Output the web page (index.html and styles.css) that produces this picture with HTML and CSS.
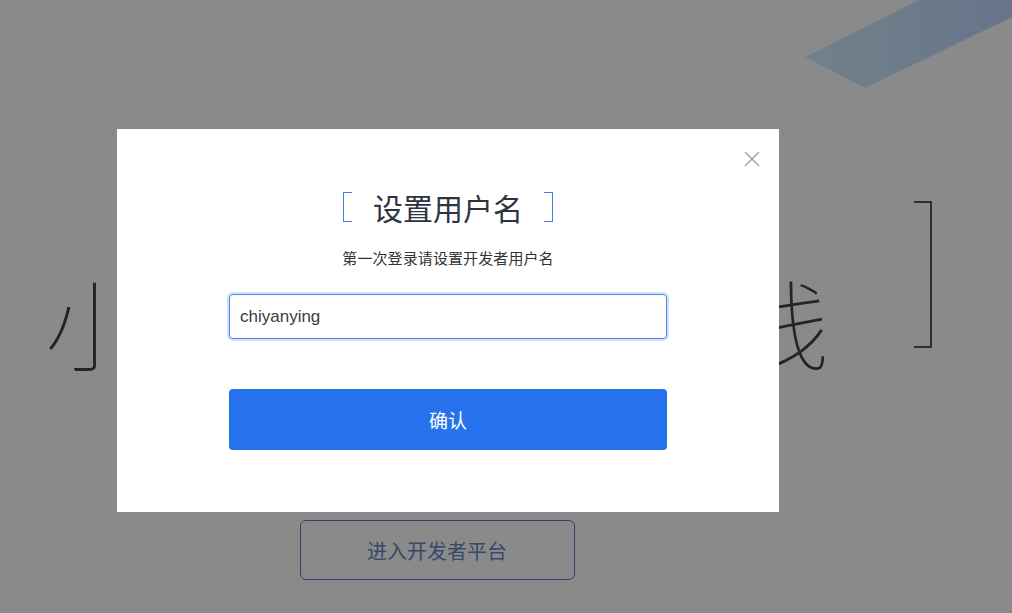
FILE: index.html
```html
<!DOCTYPE html>
<html lang="zh-CN">
<head>
    <meta charset="UTF-8">
    <meta name="viewport" content="width=device-width, initial-scale=1.0">
    <title>开发者平台</title>
    <link rel="stylesheet" href="styles.css">
</head>
<body>
    <div class="page">
        <div class="dots"></div>
        <svg class="ribbon" width="207" height="90" viewBox="0 0 207 90">
            <defs>
                <linearGradient id="rb" x1="0" y1="0" x2="1" y2="0">
                    <stop offset="0" stop-color="#d2f0ff"/>
                    <stop offset="1" stop-color="#bcd8ff"/>
                </linearGradient>
            </defs>
            <polygon points="0,57 114,0 207,0 207,17 60,88" fill="url(#rb)"/>
        </svg>
        <div class="hero">
            <div class="slogan">
                <span class="big-bracket left"></span>
                <h1>小程序云开发上线</h1>
                <span class="big-bracket right"></span>
            </div>
            <a class="enter-btn" href="#">进入开发者平台</a>
        </div>
    </div>

    <div class="mask"></div>
    <div class="dialog">
        <span class="close">
            <svg width="16" height="16" viewBox="0 0 16 16"><path d="M1 1L15 15M15 1L1 15" stroke="#9a9a9a" stroke-width="1.2" fill="none"/></svg>
        </span>
        <div class="dialog-title">
            <span class="sq left"></span>
            <h2>设置用户名</h2>
            <span class="sq right"></span>
        </div>
        <p class="dialog-tip">第一次登录请设置开发者用户名</p>
        <input type="text" class="name-input" value="chiyanying" autofocus>
        <button class="confirm">确认</button>
    </div>
</body>
</html>
```

FILE: styles.css
```css
* {
    box-sizing: border-box;
    margin: 0;
    padding: 0;
}
body {
    font-family: "Noto Sans CJK SC", "Noto Sans", sans-serif;
    background: #fff;
    color: #333;
    overflow: hidden;
}
.page {
    position: relative;
    height: 100vh;
    overflow: hidden;
}
.dots {
    height: 2px;
    margin-top: 55px;
    background-image: linear-gradient(to right, #d6d6d6 2px, transparent 2px);
    background-size: 80px 2px;
    background-position: 7px 0;
    background-repeat: repeat-x;
}
.ribbon {
    position: absolute;
    top: 0;
    right: 0;
}
.hero {
    width: 990px;
    margin-left: -58px;
    display: flex;
    flex-direction: column;
    align-items: center;
}
.slogan {
    width: 100%;
    display: flex;
    justify-content: space-between;
    margin-top: 144px;
}
.slogan h1 {
    font-size: 98px;
    font-weight: 100;
    line-height: 1;
    color: #444;
    margin-top: 70px;
    white-space: nowrap;
}
.big-bracket {
    width: 18px;
    height: 147px;
    border: 2px solid #555;
}
.big-bracket.left { border-right: none; }
.big-bracket.right { border-left: none; }
.enter-btn {
    margin-top: 151px;
    width: 275px;
    height: 60px;
    border: 1px solid #5f7fc0;
    border-radius: 6px;
    display: flex;
    justify-content: center;
    align-items: center;
    font-size: 20px;
    color: #6a86c2;
    text-decoration: none;
}

.mask {
    position: fixed;
    inset: 0;
    background: rgba(0, 0, 0, 0.46);
}
.dialog {
    position: fixed;
    left: 117px;
    top: 129px;
    width: 662px;
    height: 383px;
    background: #fff;
    display: flex;
    flex-direction: column;
    align-items: center;
    padding: 58px 112px 0;
}
.close {
    position: absolute;
    top: 22px;
    right: 19px;
    width: 16px;
    height: 16px;
    cursor: pointer;
}
.close svg { display: block; }
.dialog-title {
    display: flex;
    align-items: center;
    gap: 21px;
    height: 40px;
}
.dialog-title h2 {
    font-size: 30px;
    font-weight: normal;
    color: #2e3340;
    line-height: 40px;
}
.sq {
    width: 9px;
    height: 30px;
    border: 1.5px solid #4a7cdb;
}
.sq.left { border-right: none; }
.sq.right { border-left: none; }
.dialog-tip {
    margin-top: 20px;
    font-size: 15px;
    line-height: 22px;
    letter-spacing: 0.1px;
    color: #333;
}
.name-input {
    margin-top: 25px;
    width: 100%;
    height: 45px;
    border: 1px solid #4f87e6;
    border-radius: 4px;
    box-shadow: 0 0 0 2px #d3e2fb;
    outline: none;
    padding: 0 10px;
    font-family: "Liberation Sans", Arial, sans-serif;
    font-size: 17px;
    color: #3c3c3c;
}
.confirm {
    margin-top: 50px;
    width: 100%;
    height: 61px;
    border: none;
    border-radius: 4px;
    background: #2672ed;
    color: #fff;
    font-family: inherit;
    font-size: 19px;
    cursor: pointer;
}
```
